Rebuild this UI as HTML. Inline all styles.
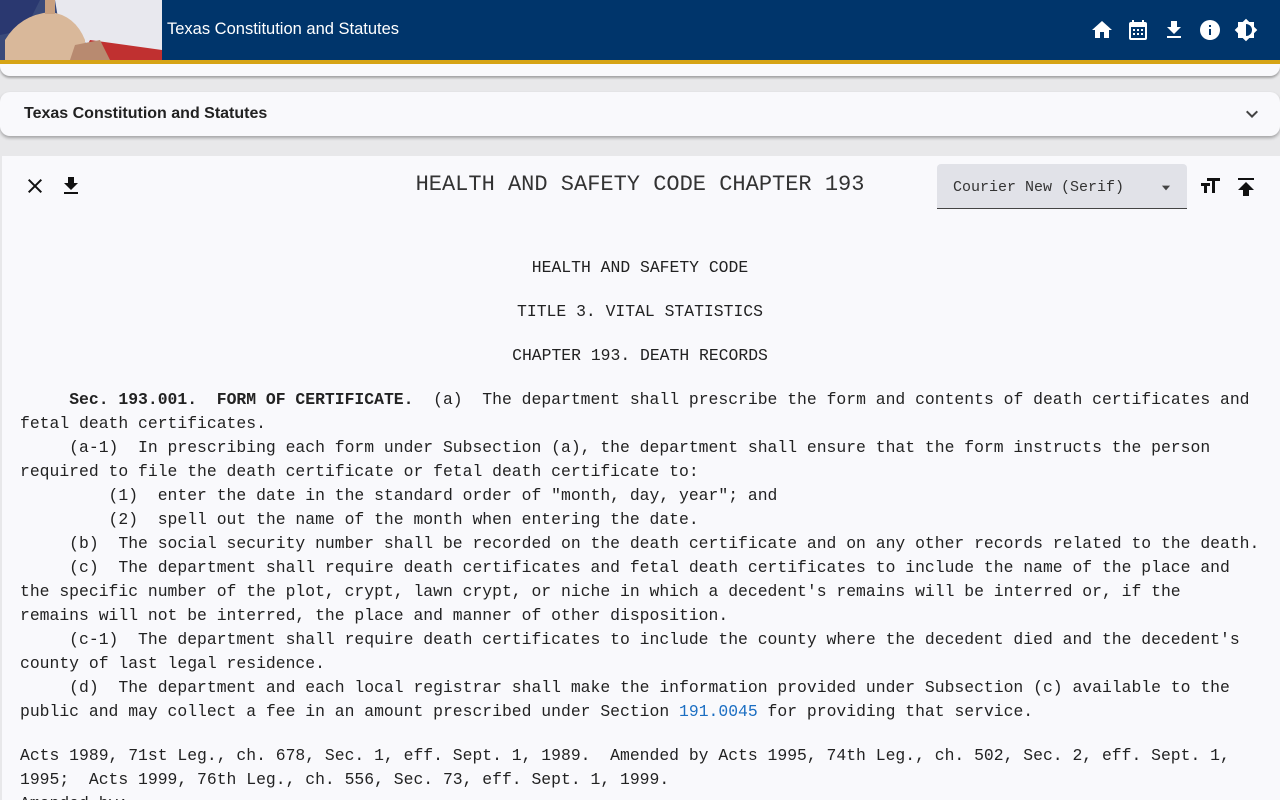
<!DOCTYPE html>
<html><head><meta charset="utf-8"><style>
*{margin:0;padding:0;box-sizing:border-box}
html{width:1280px;height:800px;overflow:hidden}
body{width:1280px;height:800px;overflow:hidden;background:#e8e8ea;font-family:"Liberation Sans",sans-serif;position:relative}
.hdr{position:absolute;left:0;top:0;width:1280px;height:60px;background:#00356b}
.gold{position:absolute;left:0;top:60px;width:1280px;height:4px;background:#d6a416}
.logo{position:absolute;left:0;top:0;width:162px;height:60px;overflow:hidden}
.ttl{position:absolute;left:167px;top:20px;color:#fff;font-size:16.5px}
.ic{position:absolute;top:18px}
.card1{position:absolute;left:0;top:64px;width:1280px;height:12px;background:#f9f9fc;border-radius:0 0 10px 10px;box-shadow:0 2px 2px rgba(0,0,0,.3)}
.card2{position:absolute;left:0;top:92px;width:1280px;height:44px;background:#f9f9fc;border-radius:10px;box-shadow:0 2px 3px rgba(0,0,0,.3)}
.card2 span{position:absolute;left:24px;top:13px;font-size:16px;font-weight:bold;color:#222}
.main{position:absolute;left:2px;top:156px;width:1278px;height:644px;background:#f9f9fc}
.ln{position:absolute;left:20px;white-space:pre;font-family:"Liberation Mono",monospace;font-size:16.4px;line-height:24px;color:#222}
.c{left:0;width:1280px;text-align:center}
a{color:#1b6ec2;text-decoration:none}
.sel{position:absolute;left:937px;top:164px;width:250px;height:45px;background:#e1e2e8;border-bottom:1px solid #444;border-radius:4px 4px 0 0}
</style></head><body>
<div class="hdr"></div>
<div class="logo"><svg width="162" height="60">
<rect width="162" height="60" fill="#3a4a7a"/>
<path d="M55 0 L162 0 L162 55 L120 60 L60 30 Z" fill="#e8e8ee"/>
<path d="M90 40 L162 50 L162 60 L80 60 Z" fill="#c03030"/>
<path d="M0 0 L40 0 L25 30 L0 35Z" fill="#2a3870"/>
<path d="M5 60 L5 40 Q20 15 50 12 Q75 15 85 40 L85 60Z" fill="#d9b89a"/>
<rect x="45" y="0" width="10" height="14" fill="#c8a080"/>
<path d="M70 60 L75 45 L100 40 L110 60Z" fill="#b88a70"/>
</svg></div>
<div class="ttl">Texas Constitution and Statutes</div>
<svg class="ic" style="left:1090px" width="24" height="24" viewBox="0 0 24 24"><path fill="#fff" d="M10 20v-6h4v6h5v-8h3L12 3 2 12h3v8z"/></svg>
<svg class="ic" style="left:1126px" width="24" height="24" viewBox="0 0 24 24"><path fill="#fff" d="M19 4h-1V2h-2v2H8V2H6v2H5a2 2 0 0 0-2 2v14a2 2 0 0 0 2 2h14a2 2 0 0 0 2-2V6a2 2 0 0 0-2-2zm0 16H5V9h14zM7 11h2v2H7zm4 0h2v2h-2zm4 0h2v2h-2zM7 15h2v2H7zm4 0h2v2h-2zm4 0h2v2h-2z"/></svg>
<svg class="ic" style="left:1162px" width="24" height="24" viewBox="0 0 24 24"><path fill="#fff" d="M19 9h-4V3H9v6H5l7 7 7-7zM5 18v2h14v-2z"/></svg>
<svg class="ic" style="left:1198px" width="24" height="24" viewBox="0 0 24 24"><path fill="#fff" d="M12 2a10 10 0 1 0 0 20 10 10 0 0 0 0-20zm1 15h-2v-6h2zm0-8h-2V7h2z"/></svg>
<svg class="ic" style="left:1234px" width="24" height="24" viewBox="0 0 24 24"><path fill="#fff" d="M20 8.69V4h-4.69L12 .69 8.69 4H4v4.69L.69 12 4 15.310V20h4.69L12 23.31 15.31 20H20v-4.69L23.31 12 20 8.69zM12 18V6a6 6 0 0 1 0 12z"/></svg>
<div class="gold"></div>
<div class="card1"></div>
<div class="card2"><span>Texas Constitution and Statutes</span>
<svg style="position:absolute;left:1240px;top:10px" width="24" height="24" viewBox="0 0 24 24"><path fill="#444" d="M7.41 8.59 12 13.17l4.59-4.58L18 10l-6 6-6-6z"/></svg></div>
<div class="main"></div>
<svg style="position:absolute;left:23px;top:174px" width="24" height="24" viewBox="0 0 24 24"><path fill="#111" d="M19 6.41 17.59 5 12 10.59 6.41 5 5 6.41 10.59 12 5 17.59 6.41 19 12 13.41 17.59 19 19 17.59 13.41 12z"/></svg>
<svg style="position:absolute;left:59px;top:174px" width="24" height="24" viewBox="0 0 24 24"><path fill="#111" d="M19 9h-4V3H9v6H5l7 7 7-7zM5 18v2h14v-2z"/></svg>
<div class="ln c" style="top:170px;font-size:22px;line-height:30px;color:#333">HEALTH AND SAFETY CODE CHAPTER 193</div>
<div class="sel"><span style="position:absolute;left:16px;top:15px;font-family:'Liberation Mono',monospace;font-size:15px;color:#333">Courier New (Serif)</span>
<svg style="position:absolute;left:222px;top:17px" width="14" height="14" viewBox="0 0 24 24"><path fill="#444" d="M5 8l7 8 7-8z"/></svg></div>
<svg style="position:absolute;left:1198px;top:174px" width="24" height="24" viewBox="0 0 24 24"><path fill="#111" d="M9 4v3h5v12h3V7h5V4zm-6 8h3v7h3v-7h3V9H3z"/></svg>
<svg style="position:absolute;left:1234px;top:174px" width="24" height="24" viewBox="0 0 24 24"><path fill="#111" d="M4 4h16v2H4zm0 12h5v6h6v-6h5l-8-8z"/></svg>
<div class="ln c" style="top:256px">HEALTH AND SAFETY CODE</div>
<div class="ln c" style="top:300px">TITLE 3. VITAL STATISTICS</div>
<div class="ln c" style="top:344px">CHAPTER 193. DEATH RECORDS</div>
<div class="ln" style="top:388px">     <b>Sec. 193.001.  FORM OF CERTIFICATE.</b>  (a)  The department shall prescribe the form and contents of death certificates and
fetal death certificates.
     (a-1)  In prescribing each form under Subsection (a), the department shall ensure that the form instructs the person
required to file the death certificate or fetal death certificate to:
         (1)  enter the date in the standard order of "month, day, year"; and
         (2)  spell out the name of the month when entering the date.
     (b)  The social security number shall be recorded on the death certificate and on any other records related to the death.
     (c)  The department shall require death certificates and fetal death certificates to include the name of the place and
the specific number of the plot, crypt, lawn crypt, or niche in which a decedent's remains will be interred or, if the
remains will not be interred, the place and manner of other disposition.
     (c-1)  The department shall require death certificates to include the county where the decedent died and the decedent's
county of last legal residence.
     (d)  The department and each local registrar shall make the information provided under Subsection (c) available to the
public and may collect a fee in an amount prescribed under Section <a>191.0045</a> for providing that service.</div>
<div class="ln" style="top:744px">Acts 1989, 71st Leg., ch. 678, Sec. 1, eff. Sept. 1, 1989.  Amended by Acts 1995, 74th Leg., ch. 502, Sec. 2, eff. Sept. 1,
1995;  Acts 1999, 76th Leg., ch. 556, Sec. 73, eff. Sept. 1, 1999.
Amended by:</div>
</body></html>
